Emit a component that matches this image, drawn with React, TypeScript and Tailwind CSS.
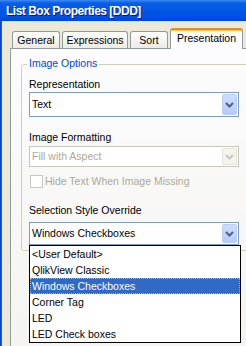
import type { ReactNode } from 'react';

const TABS = [
  { label: 'General', width: 'w-[48px]' },
  { label: 'Expressions', width: 'w-[66px]' },
  { label: 'Sort', width: 'w-[38px]' },
];

const STYLE_OPTIONS = [
  '<User Default>',
  'QlikView Classic',
  'Windows Checkboxes',
  'Corner Tag',
  'LED',
  'LED Check boxes',
];

function Chevron({ disabled = false }: { disabled?: boolean }) {
  return (
    <svg width="9" height="6" viewBox="0 0 9 6" aria-hidden="true">
      <path
        d="M1 1L4.5 4.5L8 1"
        fill="none"
        stroke={disabled ? '#C9C7BA' : '#4D6185'}
        strokeWidth="2"
      />
    </svg>
  );
}

function Combo({ value, className, disabled = false }: { value: string; className: string; disabled?: boolean }) {
  return (
    <div
      className={`flex w-[210px] p-[1px] bg-white border ${
        disabled ? 'border-[#C9C7BA] text-[#ACA899]' : 'border-[#7F9DB9] text-black'
      } ${className}`}
    >
      <span className="flex-1 flex items-center pl-[1px] whitespace-nowrap">{value}</span>
      <span
        className={`w-[15px] flex items-center justify-center rounded-[2px] border ${
          disabled
            ? 'bg-[#F4F3EE] border-[#E6E4DA]'
            : 'bg-gradient-to-b from-[#CFDDFD] to-[#B7CBF8] border-[#B9CDF9]'
        }`}
      >
        <Chevron disabled={disabled} />
      </span>
    </div>
  );
}

function Label({ children, className }: { children: ReactNode; className: string }) {
  return <div className={`whitespace-nowrap ${className}`}>{children}</div>;
}

export default function App() {
  return (
    <div className="w-[246px] h-[346px] overflow-hidden flex flex-col bg-[#ECE9D8] font-['Liberation_Sans',Arial,sans-serif] text-[10.5px] leading-[13px] text-black">
      {/* Title bar */}
      <div className="h-[21px] shrink-0 flex items-center pt-[2px] pl-[6px] bg-[linear-gradient(to_bottom,#3A8CF5_0px,#0A5DE8_3px,#0055E5_12px,#0050DC_18px,#0046C8_21px)]">
        <span className="text-white font-bold text-[12px] tracking-[-0.5px] [text-shadow:1px_1px_0_#0A1883] whitespace-nowrap">
          List Box Properties [DDD]
        </span>
      </div>

      <div className="flex-1 flex">
        {/* window frame */}
        <div className="w-[2px] shrink-0 bg-[#1664EE] border-l border-[#0A45C8]" />

        <div className="flex-1 pt-[7px] pl-[8px]">
          {/* Tabs */}
          <div className="relative z-10 h-[21px] flex items-end gap-[2px] pl-[2px]">
            {TABS.map((tab) => (
              <div
                key={tab.label}
                className={`${tab.width} h-[17px] mb-[1px] flex items-center justify-center rounded-t-[3px] border border-b-0 border-[#919B9C] bg-gradient-to-b from-[#FEFEFE] to-[#ECEBE5]`}
              >
                {tab.label}
              </div>
            ))}
            <div className="w-[73px] h-[21px] flex justify-center pt-[2px] rounded-t-[3px] border-x border-[#919B9C] border-t-[2px] border-t-[#E68B2C] shadow-[inset_0_1px_0_#FFC83C] bg-[#FCFCFE]">
              Presentation
            </div>
          </div>

          {/* Tab panel */}
          <div className="-mt-[1px] w-[260px] h-[320px] border border-[#919B9C] bg-gradient-to-b from-[#FCFCFE] to-[#F4F3EE]">
            <div className="relative ml-[10px] mt-[15px] w-[240px] rounded-[3px] border border-[#D0D0BF] pl-[7px] pb-[5px]">
              <span className="absolute -top-[8px] left-[5px] px-[2px] bg-[#FCFCFE] text-[#0046D5]">
                Image Options
              </span>

              <Label className="pt-[13px]">Representation</Label>
              <Combo value="Text" className="mt-[1px] h-[25px]" />

              <Label className="mt-[14px]">Image Formatting</Label>
              <Combo value="Fill with Aspect" className="mt-[2px] h-[21px]" disabled />

              <div className="mt-[8px] flex items-center h-[13px]">
                <span className="ml-[1px] w-[13px] h-[13px] border border-[#CAC8BB] bg-white" />
                <span className="ml-[2px] text-[#ACA899] whitespace-nowrap">Hide Text When Image Missing</span>
              </div>

              <Label className="mt-[16px]">Selection Style Override</Label>
              <div className="relative mt-[5px]">
                <Combo value="Windows Checkboxes" className="h-[23px]" />

                {/* open dropdown list */}
                <div className="absolute left-0 top-full z-20 w-[212px] border border-black bg-white">
                  {STYLE_OPTIONS.map((opt) => (
                    <div
                      key={opt}
                      className={`h-[16px] flex items-center pl-[1px] border whitespace-nowrap ${
                        opt === 'Windows Checkboxes'
                          ? 'bg-[#316AC5] text-white border-dotted border-[#E0A64A]'
                          : 'border-transparent'
                      }`}
                    >
                      {opt}
                    </div>
                  ))}
                </div>
              </div>
            </div>
          </div>
        </div>
      </div>
    </div>
  );
}
